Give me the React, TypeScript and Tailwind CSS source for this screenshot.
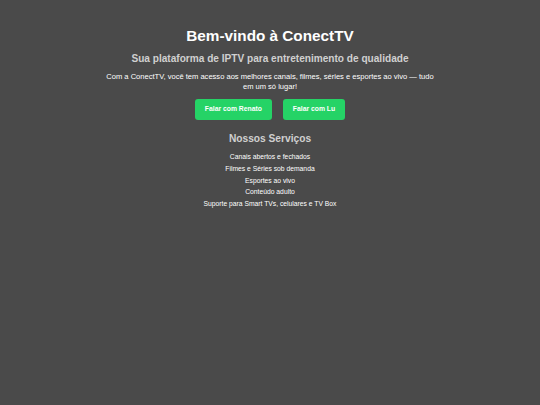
export default function App() {
  const services = [
    "Canais abertos e fechados",
    "Filmes e Séries sob demanda",
    "Esportes ao vivo",
    "Conteúdo adulto",
    "Suporte para Smart TVs, celulares e TV Box",
  ];

  return (
    <div className="min-h-screen bg-[#4a4a4a] font-['Liberation_Sans',Arial,sans-serif] text-white">
      <div className="mx-auto flex max-w-[334px] flex-col items-center pt-[26px] text-center">
        <h1 className="text-[15.3px] font-bold leading-[20px]">Bem-vindo à ConectTV</h1>
        <h2 className="mt-[6px] text-[10.1px] font-bold leading-[14px] text-[#d0d0d0]">
          Sua plataforma de IPTV para entretenimento de qualidade
        </h2>
        <p className="mt-[6px] text-[7.55px] leading-[10px]">
          Com a ConectTV, você tem acesso aos melhores canais, filmes, séries e esportes ao vivo — tudo em um só lugar!
        </p>
        <div className="mt-[7px] flex gap-[11px]">
          <button className="h-[21px] rounded-[3px] bg-[#25d366] px-[10px] text-[6.8px] font-bold text-white">
            Falar com Renato
          </button>
          <button className="h-[21px] rounded-[3px] bg-[#25d366] px-[10px] text-[6.8px] font-bold text-white">
            Falar com Lu
          </button>
        </div>
        <h3 className="mt-[12px] text-[10.2px] font-bold leading-[14px] text-[#d0d0d0]">Nossos Serviços</h3>
        <ul className="mt-[6px] flex flex-col gap-[2.5px] text-[6.75px] leading-[9.3px]">
          {services.map((s) => (
            <li key={s}>{s}</li>
          ))}
        </ul>
      </div>
    </div>
  );
}
